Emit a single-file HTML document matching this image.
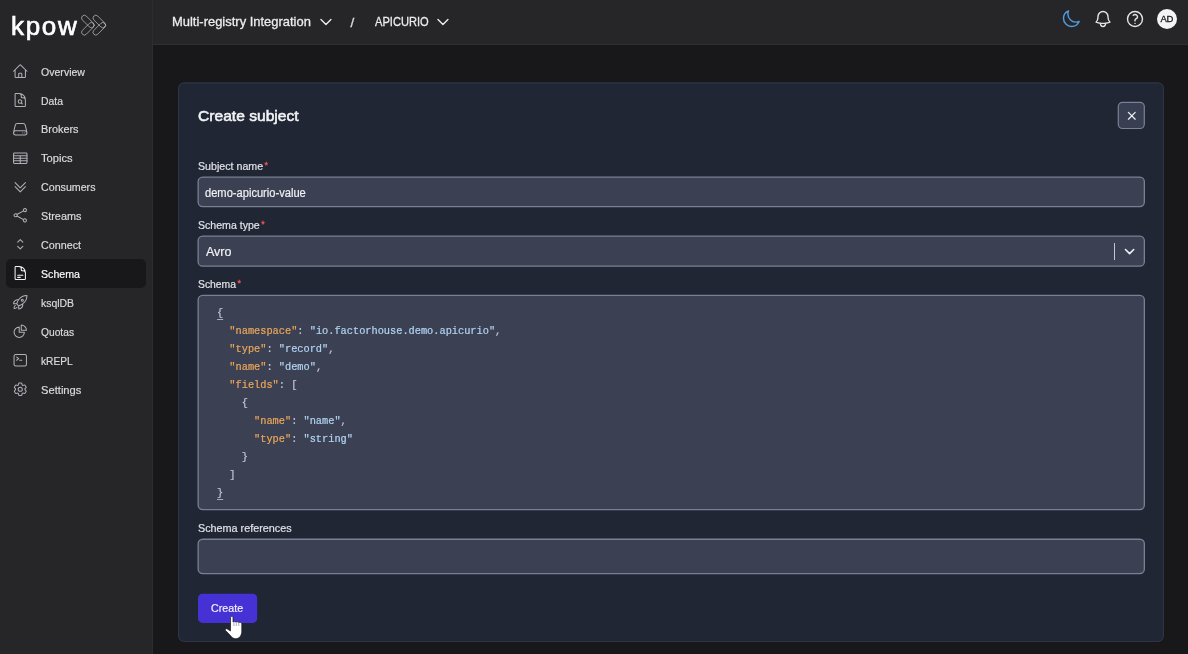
<!DOCTYPE html>
<html lang="en">
<head>
<meta charset="utf-8">
<title>Kpow - Create subject</title>
<style>
*{box-sizing:border-box;margin:0;padding:0}
html,body{width:1188px;height:654px;overflow:hidden;background:#18181b}
body{position:relative;will-change:transform;font-family:"Liberation Sans",sans-serif;color:#e4e4e7;font-size:12px}
.sx{display:inline-block;transform-origin:left center;white-space:nowrap;transform:translateY(var(--dy,0px)) scaleX(var(--k,1))}
#side{position:absolute;left:0;top:0;width:153px;height:654px;background:#262629;border-right:1.6px solid #2d2d31}
#top{position:absolute;left:153px;top:0;width:1035px;height:45px;background:#262629;border-bottom:1.5px solid #2f2f33}
.nav{position:absolute;left:6px;width:140px;height:29px;border-radius:5px}
.nav.on{background:#18181b}
.nav svg{position:absolute;left:5.8px;top:6.2px;width:16.5px;height:16.5px;fill:none;stroke:#b0b0b9;stroke-width:1.5;stroke-linecap:round;stroke-linejoin:round}
.nav.on svg{stroke:#f4f4f5}
.nav .t{position:absolute;left:35px;top:0.9px;line-height:29px;font-size:11.5px;color:#dadade;-webkit-text-stroke:0.2px #dadade}
.nav.on .t{color:#f8f8f9;-webkit-text-stroke:0.2px #f8f8f9}
#logo{position:absolute;left:11px;top:9.5px;font-size:26px;line-height:32px;color:#fff;letter-spacing:1.7px;-webkit-text-stroke:0.65px #fff}
#mark{position:absolute;left:78px;top:12px;width:32px;height:26px;fill:none;stroke:#c6c6ce;stroke-width:0.65}
.tt{position:absolute;top:0.7px;line-height:43px;font-size:13.4px;color:#ececef;-webkit-text-stroke:0.3px #ececef}
.ti{position:absolute;fill:none;stroke-width:1.5;stroke-linecap:round;stroke-linejoin:round}
#av{position:absolute;left:1157px;top:9px;width:20px;height:20px;border-radius:50%;background:#f4f4f5;color:#18181b;font-size:9.5px;-webkit-text-stroke:0.3px #18181b;letter-spacing:-0.4px;line-height:20.5px;text-align:center;text-indent:-0.4px}
#boxes{position:absolute;left:0;top:0;width:1188px;height:654px}
.lbl{position:absolute;left:198px;font-size:11.5px;line-height:14px;color:#e0e2e8;-webkit-text-stroke:0.2px #e0e2e8;white-space:nowrap}
.lbl i{font-style:normal;color:#f0564f;-webkit-text-stroke:0.3px #f0564f;position:absolute;top:-1.2px;font-size:9px;margin-left:0.9px}
.inp{position:absolute;left:198px;width:947px;border:1px solid transparent}
.inp .v{position:absolute;left:6px;top:0;color:#f0f1f5;-webkit-text-stroke:0.2px #f0f1f5;white-space:nowrap}
#title{position:absolute;left:197.6px;top:105.8px;font-size:15px;line-height:20px;color:#f3f4f6;-webkit-text-stroke:0.55px #f3f4f6;white-space:nowrap}
pre{position:absolute;left:217px;top:303.7px;font-family:"Liberation Mono",monospace;font-size:10.3px;line-height:18px;color:#bcc6d6;-webkit-text-stroke:0.22px currentColor}
pre .k{color:#e9a55c}
pre .s{color:#b0d2f1}
pre u{text-decoration:underline;text-decoration-thickness:1px;text-underline-offset:3.3px;text-decoration-color:rgba(205,208,216,0.75);text-decoration-skip-ink:none}
#btn{position:absolute;left:198px;top:594px;width:59px;height:29px;color:#f3f2ff;font-size:11.5px;line-height:29px}
#btn .sx{position:absolute;left:13.2px;top:0px;--dy:0.1px;-webkit-text-stroke:0.2px #f3f2ff}
#close{position:absolute;left:1118px;top:102px;width:27px;height:27px;border:1px solid transparent}
#cur{position:absolute;left:222px;top:612px;width:26px;height:30px}
</style>
</head>
<body>
<div id="side">
  <div id="logo">kpow</div>
  <svg id="mark" viewBox="78 12 32 26">
    <rect x="-7.7" y="-2.75" width="15.4" height="5.5" rx="2.75" transform="translate(87.85 21.5) rotate(45)"/>
    <rect x="-7.7" y="-2.75" width="15.4" height="5.5" rx="2.75" transform="translate(87.85 28.8) rotate(-45)"/>
    <rect x="-7.7" y="-2.75" width="15.4" height="5.5" rx="2.75" transform="translate(99.3 21.5) rotate(45)"/>
    <rect x="-7.7" y="-2.75" width="15.4" height="5.5" rx="2.75" transform="translate(99.3 28.8) rotate(-45)"/>
  </svg>
  <div class="nav" style="top:56.8px"><svg class="" style="" viewBox="0 0 24 24"><path d="M2.25 12l8.954-8.955c.44-.439 1.152-.439 1.591 0L21.75 12M4.5 9.75v10.125c0 .621.504 1.125 1.125 1.125H9.75v-4.875c0-.621.504-1.125 1.125-1.125h2.25c.621 0 1.125.504 1.125 1.125V21h4.125c.621 0 1.125-.504 1.125-1.125V9.75M8.25 21h8.25"/></svg><span class="t"><span class="sx" style="--dy:-0.4px;--k:0.918">Overview</span></span></div>
  <div class="nav" style="top:85.7px"><svg class="" style="" viewBox="0 0 24 24"><path d="M19.5 14.25v-2.625a3.375 3.375 0 00-3.375-3.375h-1.5A1.125 1.125 0 0113.5 7.125v-1.5a3.375 3.375 0 00-3.375-3.375H8.25m5.231 13.481L15 17.25m-4.5-15H5.625c-.621 0-1.125.504-1.125 1.125v16.5c0 .621.504 1.125 1.125 1.125h12.75c.621 0 1.125-.504 1.125-1.125V11.25a9 9 0 00-9-9zm3.75 11.625a2.625 2.625 0 11-5.25 0 2.625 2.625 0 015.25 0z"/></svg><span class="t"><span class="sx" style="--dy:-0.4px;--k:0.905">Data</span></span></div>
  <div class="nav" style="top:114.6px"><svg class="" style="" viewBox="0 0 24 24"><path d="M21.75 17.25v-.228a4.5 4.5 0 00-.12-1.03l-2.268-9.64a3.375 3.375 0 00-3.285-2.602H7.923a3.375 3.375 0 00-3.285 2.602l-2.268 9.64a4.5 4.5 0 00-.12 1.03v.228m19.5 0a3 3 0 01-3 3H5.25a3 3 0 01-3-3m19.5 0a3 3 0 00-3-3H5.25a3 3 0 00-3 3m16.5 0h.008v.008h-.008v-.008zm-3 0h.008v.008h-.008v-.008z"/></svg><span class="t"><span class="sx" style="--dy:-0.4px;--k:0.947">Brokers</span></span></div>
  <div class="nav" style="top:143.5px"><svg class="" style="" viewBox="0 0 24 24"><rect x="2.25" y="4.5" width="19.5" height="15" rx="1.2"/><path d="M2.25 8.25h19.5M2.25 12h19.5M2.25 15.75h19.5M12 8.25V19.5"/></svg><span class="t"><span class="sx" style="--dy:-0.4px;--k:0.972">Topics</span></span></div>
  <div class="nav" style="top:172.4px"><svg class="" style="" viewBox="0 0 24 24"><path d="M19.5 5.25l-7.5 7.5-7.5-7.5m15 6l-7.5 7.5-7.5-7.5"/></svg><span class="t"><span class="sx" style="--dy:-0.4px;--k:0.927">Consumers</span></span></div>
  <div class="nav" style="top:201.3px"><svg class="" style="" viewBox="0 0 24 24"><path d="M7.217 10.907a2.25 2.25 0 100 2.186m0-2.186c.18.324.283.696.283 1.093s-.103.77-.283 1.093m0-2.186l9.566-5.314m-9.566 7.5l9.566 5.314m0 0a2.25 2.25 0 103.935 2.186 2.25 2.25 0 00-3.935-2.186zm0-12.814a2.25 2.25 0 103.933-2.185 2.25 2.25 0 00-3.933 2.185z"/></svg><span class="t"><span class="sx" style="--dy:-0.4px;--k:0.943">Streams</span></span></div>
  <div class="nav" style="top:230.2px"><svg class="" style="" viewBox="0 0 24 24"><path d="M8.25 15L12 18.75 15.75 15m-7.5-6L12 5.25 15.75 9"/></svg><span class="t"><span class="sx" style="--dy:-0.4px;--k:0.934">Connect</span></span></div>
  <div class="nav on" style="top:259.1px"><svg class="" style="" viewBox="0 0 24 24"><path d="M19.5 14.25v-2.625a3.375 3.375 0 00-3.375-3.375h-1.5A1.125 1.125 0 0113.5 7.125v-1.5a3.375 3.375 0 00-3.375-3.375H8.25m0 12.75h7.5m-7.5 3H12M10.5 2.25H5.625c-.621 0-1.125.504-1.125 1.125v16.5c0 .621.504 1.125 1.125 1.125h12.75c.621 0 1.125-.504 1.125-1.125V11.25a9 9 0 00-9-9z"/></svg><span class="t"><span class="sx" style="--dy:-0.4px;--k:0.924">Schema</span></span></div>
  <div class="nav" style="top:288.0px"><svg class="" style="" viewBox="0 0 24 24"><path d="M15.59 14.37a6 6 0 01-5.84 7.38v-4.8m5.84-2.58a14.98 14.98 0 006.16-12.12A14.98 14.98 0 009.631 8.41m5.96 5.96a14.926 14.926 0 01-5.841 2.58m-.119-8.54a6 6 0 00-7.381 5.84h4.8m2.581-5.84a14.927 14.927 0 00-2.58 5.84m2.699 2.7c-.103.021-.207.041-.311.06a15.09 15.09 0 01-2.448-2.448 14.9 14.9 0 01.06-.312m-2.24 2.39a4.493 4.493 0 00-1.757 4.306 4.493 4.493 0 004.306-1.758M16.5 9a1.5 1.5 0 11-3 0 1.5 1.5 0 013 0z"/></svg><span class="t"><span class="sx" style="--dy:-0.4px;--k:0.906">ksqlDB</span></span></div>
  <div class="nav" style="top:316.9px"><svg class="" style="" viewBox="0 0 24 24"><path d="M10.5 6a7.5 7.5 0 107.5 7.5h-7.5V6z"/><path d="M13.5 10.5H21A7.5 7.5 0 0013.5 3v7.5z"/></svg><span class="t"><span class="sx" style="--dy:-0.4px;--k:0.890">Quotas</span></span></div>
  <div class="nav" style="top:345.8px"><svg class="" style="" viewBox="0 0 24 24"><path d="M6.75 7.5l3 2.25-3 2.25m4.5 0h3m-9 8.25h13.5A2.25 2.25 0 0021 18V6a2.25 2.25 0 00-2.25-2.25H5.25A2.25 2.25 0 003 6v12a2.25 2.25 0 002.25 2.25z"/></svg><span class="t"><span class="sx" style="--dy:-0.4px;--k:0.885">kREPL</span></span></div>
  <div class="nav" style="top:374.7px"><svg class="" style="" viewBox="0 0 24 24"><path d="M9.594 3.94c.09-.542.56-.94 1.11-.94h2.593c.55 0 1.02.398 1.11.94l.213 1.281c.063.374.313.686.645.87.074.04.147.083.22.127.324.196.72.257 1.075.124l1.217-.456a1.125 1.125 0 011.37.49l1.296 2.247a1.125 1.125 0 01-.26 1.431l-1.003.827c-.293.24-.438.613-.431.992a6.759 6.759 0 010 .255c-.007.378.138.75.43.99l1.005.828c.424.35.534.954.26 1.43l-1.298 2.247a1.125 1.125 0 01-1.369.491l-1.217-.456c-.355-.133-.75-.072-1.076.124a6.57 6.57 0 01-.22.128c-.331.183-.581.495-.644.869l-.213 1.28c-.09.543-.56.941-1.11.941h-2.594c-.55 0-1.02-.398-1.11-.94l-.213-1.281c-.062-.374-.312-.686-.644-.87a6.52 6.52 0 01-.22-.127c-.325-.196-.72-.257-1.076-.124l-1.217.456a1.125 1.125 0 01-1.369-.49l-1.297-2.247a1.125 1.125 0 01.26-1.431l1.004-.827c.292-.24.437-.613.43-.992a6.932 6.932 0 010-.255c.007-.378-.138-.75-.43-.99l-1.004-.828a1.125 1.125 0 01-.26-1.43l1.297-2.247a1.125 1.125 0 011.37-.491l1.216.456c.356.133.751.072 1.076-.124.072-.044.146-.087.22-.128.332-.183.582-.495.644-.869l.214-1.281z"/><path d="M15 12a3 3 0 11-6 0 3 3 0 016 0z"/></svg><span class="t"><span class="sx" style="--dy:-0.4px;--k:0.972">Settings</span></span></div>
</div>
<div id="top"></div>
<span class="tt" style="left:172px"><span class="sx" style="--k:0.967;--dy:-0.55px">Multi-registry Integration</span></span>
<svg class="ti" style="left:317.85px;top:13.65px;width:15.9px;height:15.9px;stroke:#ececef;stroke-width:2.1" viewBox="0 0 24 24"><path d="M19.5 8.25l-7.5 7.5-7.5-7.5"/></svg>
<span class="tt" style="left:350.5px;color:#d4d4d8"><span class="sx" style="--dy:-0.5px">/</span></span>
<span class="tt" style="left:374.7px"><span class="sx" style="--k:0.83;--dy:-0.55px">APICURIO</span></span>
<svg class="ti" style="left:434.7px;top:13.65px;width:15.9px;height:15.9px;stroke:#ececef;stroke-width:2.1" viewBox="0 0 24 24"><path d="M19.5 8.25l-7.5 7.5-7.5-7.5"/></svg>
<svg class="ti" style="left:1061px;top:9px;width:20px;height:20px;stroke-width:1.7;stroke:#4f9be0" viewBox="0 0 24 24"><path d="M21.752 15.002A9.718 9.718 0 0118 15.75c-5.385 0-9.75-4.365-9.75-9.75 0-1.33.266-2.597.748-3.752A9.753 9.753 0 003 11.25C3 16.635 7.365 21 12.75 21a9.753 9.753 0 009.002-5.998z"/></svg>
<svg class="ti" style="left:1093px;top:9px;width:20px;height:20px;stroke-width:1.7;stroke:#e4e4e7" viewBox="0 0 24 24"><path d="M14.857 17.082a23.848 23.848 0 005.454-1.31A8.967 8.967 0 0118 9.75v-.7V9A6 6 0 006 9v.75a8.967 8.967 0 01-2.312 6.022c1.733.64 3.56 1.085 5.455 1.31m5.714 0a24.255 24.255 0 01-5.714 0m5.714 0a3 3 0 11-5.714 0"/></svg>
<svg class="ti" style="left:1125px;top:9px;width:20px;height:20px;stroke-width:1.7;stroke:#e4e4e7" viewBox="0 0 24 24"><path d="M9.879 7.519c1.171-1.025 3.071-1.025 4.242 0 1.172 1.025 1.172 2.687 0 3.712-.203.179-.43.326-.67.442-.745.361-1.45.999-1.45 1.827v.75M21 12a9 9 0 11-18 0 9 9 0 0118 0zm-9 5.25h.008v.008H12v-.008z"/></svg>
<div id="av">AD</div>

<svg id="boxes" viewBox="0 0 1188 654">
  <rect x="178.55" y="82.85" width="984.90" height="558.60" rx="5.5" fill="#212634" stroke="#2d3446" stroke-width="1.1"/>
  <rect x="198.15" y="177.05" width="946.20" height="29.50" rx="4.5" fill="#3b4052" stroke="#7a8091" stroke-width="1.3"/>
  <rect x="198.15" y="236.05" width="946.20" height="30.10" rx="4.5" fill="#3b4052" stroke="#7a8091" stroke-width="1.3"/>
  <rect x="198.15" y="295.35" width="946.20" height="214.20" rx="4.5" fill="#3b4052" stroke="#7a8091" stroke-width="1.3"/>
  <rect x="198.15" y="539.25" width="946.20" height="34.30" rx="4.5" fill="#3b4052" stroke="#7a8091" stroke-width="1.3"/>
  <rect x="1118.30" y="102.40" width="26.00" height="26.10" rx="4.2" fill="#393f52" stroke="#7b8193" stroke-width="1.2"/>
  <rect x="198" y="593.7" width="59.2" height="29.2" rx="4.5" fill="#4631d4"/>
</svg>
<div id="title"><span class="sx" style="--k:1.04">Create subject</span></div>
<div id="close"><svg class="ti" style="left:5.8px;top:5.9px;width:13.6px;height:13.6px;stroke:#eef0f4;stroke-width:2.2" viewBox="0 0 24 24"><path d="M6 18L18 6M6 6l12 12"/></svg></div>

<div class="lbl" style="top:159.5px"><span class="sx" style="--k:0.926;--dy:-0.7px">Subject name</span><i style="left:65.5px">*</i></div>
<div class="inp" style="top:177px;height:30px"><span class="v" style="font-size:12px;line-height:28px"><span class="sx" style="--k:0.927;--dy:0.8px">demo-apicurio-value</span></span></div>

<div class="lbl" style="top:218.5px"><span class="sx" style="--k:0.920;--dy:-0.7px">Schema type</span><i style="left:62.3px">*</i></div>
<div class="inp" style="top:236px;height:31px"><span class="v" style="left:7px;font-size:12.5px;line-height:29px"><span class="sx" style="--k:1;--dy:0.9px">Avro</span></span>
  <div style="position:absolute;left:915px;top:6px;width:1px;height:17px;background:#c4c7d0"></div>
  <svg class="ti" style="left:924.3px;top:7.7px;width:13.2px;height:13.2px;stroke:#eceef3;stroke-width:3" viewBox="0 0 24 24"><path d="M19.5 8.25l-7.5 7.5-7.5-7.5"/></svg>
</div>

<div class="lbl" style="top:277.5px"><span class="sx" style="--k:0.901;--dy:-0.7px">Schema</span><i style="left:38.6px">*</i></div>
<div class="inp" style="top:295px;height:215px"></div>
<pre><u>{</u>
  <span class="k">"namespace"</span>: <span class="s">"io.factorhouse.demo.apicurio"</span>,
  <span class="k">"type"</span>: <span class="s">"record"</span>,
  <span class="k">"name"</span>: <span class="s">"demo"</span>,
  <span class="k">"fields"</span>: [
    {
      <span class="k">"name"</span>: <span class="s">"name"</span>,
      <span class="k">"type"</span>: <span class="s">"string"</span>
    }
  ]
<u>}</u></pre>

<div class="lbl" style="top:521.5px"><span class="sx" style="--k:0.939;--dy:-0.9px">Schema references</span></div>
<div class="inp" style="top:538px;height:36px"></div>

<div id="btn"><span class="sx" style="--k:0.93">Create</span></div>
<svg id="cur" viewBox="222 612 26 30">
  <path d="M230.5 617.6a1.25 1.25 0 0 1 2.5 0V622q1.5-.9 3 0q1.5-.6 3 .4q1.700-.4 2.800 1.100V631c0 4.200-2.200 7.700-6 7.700c-2.500 0-4-1.200-5.400-3.200L225.500 630.500c-.8-1 .2-2.300 1.500-1.700L230.500 630.900Z" fill="#fff" stroke="#15151c" stroke-width="0.7" stroke-linejoin="round"/>
  <path d="M233.900 622.300v3.700M236.300 622.400v3.600M238.750 622.700v3.300" stroke="#8a8a95" stroke-width="0.7" fill="none"/>
</svg>
</body>
</html>
